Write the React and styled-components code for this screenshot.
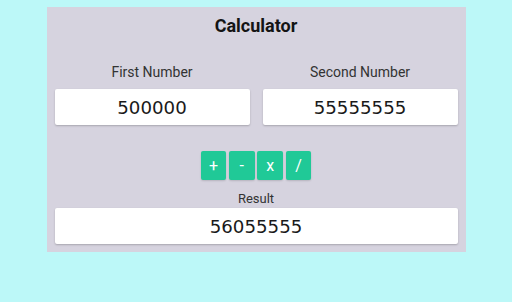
import React from "react";
import styled, { createGlobalStyle } from "styled-components";

const Global = createGlobalStyle`
  html, body { margin: 0; padding: 0; }
  body {
    background: #bcf8f8;
    font-family: Roboto, "Liberation Sans", sans-serif;
    height: 302px;
    overflow: hidden;
  }
`;

const Panel = styled.div`
  width: 419px;
  margin: 7px auto 0;
  padding: 8px 8px 8px;
  box-sizing: border-box;
  background: #d6d3df;
`;

const Title = styled.h1`
  margin: 0;
  font-family: Roboto, sans-serif;
  font-weight: 700;
  font-size: 18px;
  line-height: 21px;
  text-align: center;
  color: #141414;
`;

const Row = styled.div`
  display: grid;
  grid-template-columns: 1fr 1fr;
  column-gap: 13px;
  margin-top: 28px;
`;

const Field = styled.div`
  display: flex;
  flex-direction: column;
`;

const Label = styled.label`
  display: block;
  text-align: center;
  font-family: Roboto, sans-serif;
  font-size: ${(p) => (p.$small ? "13px" : "14px")};
  line-height: ${(p) => (p.$small ? "15px" : "16px")};
  color: #333;
  margin-top: ${(p) => (p.$small ? "10.5px" : "0")};
  margin-bottom: ${(p) => (p.$small ? "2.5px" : "9px")};
`;

const NumberBox = styled.input`
  display: block;
  width: 100%;
  box-sizing: border-box;
  height: 36px;
  border: none;
  outline: none;
  border-radius: 2px;
  background: #fff;
  box-shadow: 0 1px 2px rgba(0, 0, 0, 0.22);
  text-align: center;
  font-family: "DejaVu Sans", sans-serif;
  font-weight: 400;
  font-size: 18.2px;
  color: #1a1a1a;
  padding: 0;
`;

const Ops = styled.div`
  display: flex;
  justify-content: center;
  gap: 2.6px;
  margin-top: 26px;
`;

const OpButton = styled.button`
  width: 25.8px;
  height: 29px;
  border: none;
  border-radius: 2px;
  background: #20c997;
  color: #fff;
  font-family: Roboto, sans-serif;
  font-size: 16px;
  padding: 0;
  box-shadow: 0 1px 2px rgba(0, 0, 0, 0.15);
  cursor: pointer;
`;

export default function App() {
  return (
    <>
      <Global />
      <Panel>
        <Title>Calculator</Title>
        <Row>
          <Field>
            <Label>First Number</Label>
            <NumberBox readOnly value="500000" />
          </Field>
          <Field>
            <Label>Second Number</Label>
            <NumberBox readOnly value="55555555" />
          </Field>
        </Row>
        <Ops>
          <OpButton>+</OpButton>
          <OpButton>-</OpButton>
          <OpButton>x</OpButton>
          <OpButton>/</OpButton>
        </Ops>
        <Label $small>Result</Label>
        <NumberBox readOnly value="56055555" />
      </Panel>
    </>
  );
}
